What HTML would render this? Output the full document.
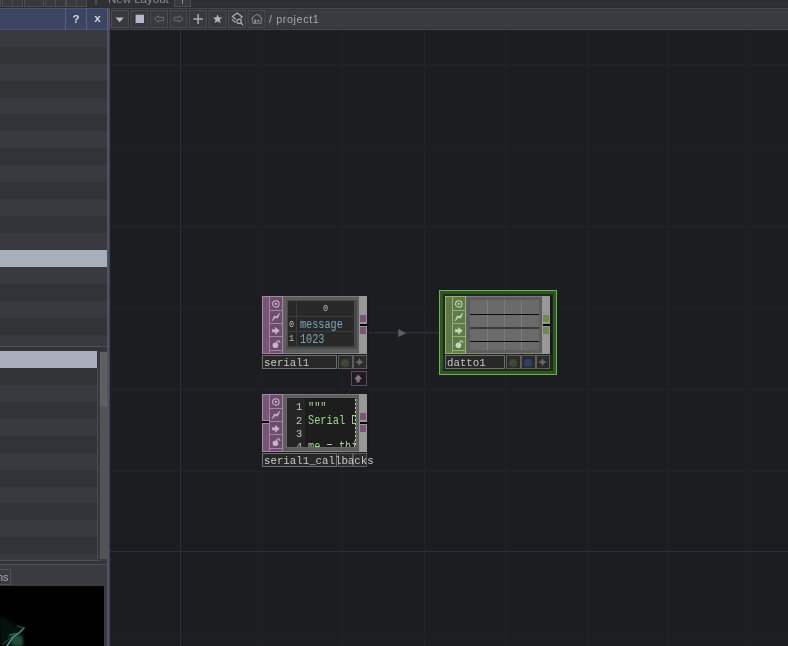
<!DOCTYPE html>
<html><head><meta charset="utf-8">
<style>
*{margin:0;padding:0;box-sizing:border-box}
html,body{width:788px;height:646px;overflow:hidden;background:#1c1d21;font-family:"Liberation Sans",sans-serif}
.a{position:absolute}
.m{font-family:"Liberation Mono",monospace;white-space:pre}
.t{will-change:transform}
svg{display:block}
</style></head><body>
<div class="a" style="left:0;top:0;width:788px;height:646px;overflow:hidden">

<div class="a" style="left:0px;top:0px;width:788px;height:8px;background:#2f3034"></div>
<div class="a" style="left:0px;top:7px;width:788px;height:1px;background:#2c2d31"></div>
<div class="a" style="left:-7px;top:-4px;width:8px;height:11px;border:1px solid #4c4d52;background:#38393e"></div>
<div class="a" style="left:2px;top:-4px;width:21px;height:11px;border:1px solid #4c4d52;background:#38393e"></div>
<div class="a" style="left:24px;top:-4px;width:20px;height:11px;border:1px solid #4c4d52;background:#38393e"></div>
<div class="a" style="left:45px;top:-4px;width:21px;height:11px;border:1px solid #4c4d52;background:#38393e"></div>
<div class="a" style="left:66px;top:-4px;width:21px;height:11px;border:1px solid #4c4d52;background:#38393e"></div>
<div class="a" style="left:12px;top:0px;width:1px;height:7px;background:#4c4d52"></div>
<div class="a" style="left:55px;top:0px;width:1px;height:7px;background:#4c4d52"></div>
<div class="a" style="left:76px;top:0px;width:1px;height:7px;background:#4c4d52"></div>
<div class="a" style="left:95px;top:0px;width:2px;height:5px;background:#4a4b50"></div>
<div class="a t" style="left:108px;top:-8.5px;font-size:11.5px;color:#8a8b90;white-space:nowrap;line-height:14px">New Layout</div>
<div class="a" style="left:174px;top:-4px;width:17px;height:11px;border:1px solid #4c4d52;background:#38393e"></div>
<div class="a" style="left:182px;top:0px;width:1px;height:4px;background:#8a8b90"></div>
<div class="a" style="left:0px;top:8px;width:108px;height:22px;background:#3b4562;border-top:1px solid #485371;border-bottom:1px solid #4a5573"></div>
<div class="a" style="left:65px;top:8px;width:1px;height:22px;background:#57628a"></div>
<div class="a" style="left:86px;top:8px;width:1px;height:22px;background:#57628a"></div>
<div class="a t" style="left:66px;top:7.8px;width:20px;height:22px;font-weight:bold;font-size:11.6px;color:#d3d6e0;text-align:center;line-height:22px">?</div>
<div class="a t" style="left:87px;top:7.6px;width:21px;height:22px;font-weight:bold;font-size:11.8px;color:#d3d6e0;text-align:center;line-height:21px">x</div>
<div class="a" style="left:0px;top:30px;width:107px;height:17px;background:#393a3f"></div>
<div class="a" style="left:0px;top:47px;width:107px;height:17px;background:#323337"></div>
<div class="a" style="left:0px;top:64px;width:107px;height:17px;background:#393a3f"></div>
<div class="a" style="left:0px;top:81px;width:107px;height:17px;background:#323337"></div>
<div class="a" style="left:0px;top:98px;width:107px;height:16px;background:#393a3f"></div>
<div class="a" style="left:0px;top:114px;width:107px;height:17px;background:#323337"></div>
<div class="a" style="left:0px;top:131px;width:107px;height:17px;background:#393a3f"></div>
<div class="a" style="left:0px;top:148px;width:107px;height:17px;background:#323337"></div>
<div class="a" style="left:0px;top:165px;width:107px;height:17px;background:#393a3f"></div>
<div class="a" style="left:0px;top:182px;width:107px;height:17px;background:#323337"></div>
<div class="a" style="left:0px;top:199px;width:107px;height:17px;background:#393a3f"></div>
<div class="a" style="left:0px;top:216px;width:107px;height:17px;background:#323337"></div>
<div class="a" style="left:0px;top:233px;width:107px;height:17px;background:#393a3f"></div>
<div class="a" style="left:0px;top:250px;width:107px;height:17px;background:#a9aebc"></div>
<div class="a" style="left:0px;top:267px;width:107px;height:17px;background:#393a3f"></div>
<div class="a" style="left:0px;top:284px;width:107px;height:17px;background:#323337"></div>
<div class="a" style="left:0px;top:301px;width:107px;height:17px;background:#393a3f"></div>
<div class="a" style="left:0px;top:318px;width:107px;height:17px;background:#323337"></div>
<div class="a" style="left:0px;top:335px;width:107px;height:11px;background:#393a3f"></div>
<div class="a" style="left:0px;top:346px;width:107px;height:1px;background:#4f5055"></div>
<div class="a" style="left:0px;top:347px;width:107px;height:4px;background:#333438"></div>
<div class="a" style="left:0px;top:351px;width:98px;height:17px;background:#a9aebc"></div>
<div class="a" style="left:0px;top:368px;width:97px;height:17px;background:#323337"></div>
<div class="a" style="left:0px;top:385px;width:97px;height:17px;background:#393a3f"></div>
<div class="a" style="left:0px;top:402px;width:97px;height:17px;background:#323337"></div>
<div class="a" style="left:0px;top:419px;width:97px;height:17px;background:#393a3f"></div>
<div class="a" style="left:0px;top:436px;width:97px;height:17px;background:#323337"></div>
<div class="a" style="left:0px;top:453px;width:97px;height:17px;background:#393a3f"></div>
<div class="a" style="left:0px;top:470px;width:97px;height:17px;background:#323337"></div>
<div class="a" style="left:0px;top:487px;width:97px;height:16px;background:#393a3f"></div>
<div class="a" style="left:0px;top:503px;width:97px;height:17px;background:#323337"></div>
<div class="a" style="left:0px;top:520px;width:97px;height:17px;background:#393a3f"></div>
<div class="a" style="left:0px;top:537px;width:97px;height:17px;background:#323337"></div>
<div class="a" style="left:0px;top:554px;width:97px;height:6px;background:#393a3f"></div>
<div class="a" style="left:97px;top:351px;width:10px;height:214px;background:#38393d"></div>
<div class="a" style="left:97px;top:368px;width:1px;height:192px;background:#4a4b4f"></div>
<div class="a" style="left:0px;top:560px;width:99px;height:1px;background:#505155"></div>
<div class="a" style="left:100px;top:352px;width:7px;height:207px;background:#535356"></div>
<div class="a" style="left:100px;top:352px;width:7px;height:54px;background:#5e5e60;border:1px solid #636365"></div>
<div class="a" style="left:0px;top:561px;width:107px;height:3px;background:#353639"></div>
<div class="a" style="left:0px;top:564px;width:107px;height:1px;background:#4f5055"></div>
<div class="a" style="left:0px;top:565px;width:107px;height:21px;background:#3a3b40"></div>
<div class="a" style="left:-20px;top:569px;width:31px;height:16px;border:1px solid #505156;background:#3a3b40"></div>
<div class="a t" style="left:-3.3px;top:569px;font-size:11px;color:#a9abb6;line-height:16px">ns</div>
<div class="a" style="left:0px;top:586px;width:104px;height:60px;background:#000"></div>
<div class="a" style="left:104px;top:586px;width:3px;height:60px;background:#3a3b40"></div>
<svg class="a" style="left:0;top:606px" width="40" height="40">
 <defs><filter id="bl" x="-50%" y="-50%" width="200%" height="200%"><feGaussianBlur stdDeviation="1.6"/></filter>
 <filter id="bl2" x="-50%" y="-50%" width="200%" height="200%"><feGaussianBlur stdDeviation="0.7"/></filter></defs>
 <path d="M0 10 Q10 14 16 20 Q22 21 24 24 L20 34 L22 40 L0 40 Z" fill="#0a261f" opacity="0.45" filter="url(#bl)"/>
 <path d="M10 30 Q18 27 23 31 L23 40 L12 40 Z" fill="#2c5c44" opacity="0.8" filter="url(#bl)"/>
 <g fill="none" stroke-linecap="round" filter="url(#bl2)">
  <path d="M24 22 L19 27 L13 31 L7 40" stroke="#4a9a8e" stroke-width="1.4"/>
  <path d="M9 29 L14 28 L19 27" stroke="#2f7568" stroke-width="1.1"/>
  <path d="M17 20 L24 22" stroke="#245a50" stroke-width="1"/>
  <path d="M3 38 L10 32" stroke="#235e52" stroke-width="1"/>
 </g>
</svg>
<div class="a" style="left:107px;top:30px;width:1px;height:616px;background:#50525a"></div>
<div class="a" style="left:108px;top:30px;width:1px;height:616px;background:#525068"></div>
<div class="a" style="left:109px;top:30px;width:1px;height:616px;background:#403e50"></div>
<div class="a" style="left:110px;top:30px;width:1px;height:616px;background:#222226"></div>
<div class="a" style="left:107px;top:9px;width:1px;height:20px;background:#56607f"></div>
<div class="a" style="left:108px;top:8px;width:1px;height:22px;background:#4d4b60"></div>
<div class="a" style="left:109px;top:8px;width:1px;height:22px;background:#5a5968"></div>
<div class="a" style="left:110px;top:8px;width:1px;height:22px;background:#2c2d31"></div>
<div class="a" style="left:111px;top:8px;width:677px;height:22px;background:#3a3b40"></div>
<div class="a" style="left:111px;top:8px;width:677px;height:1px;background:#47484d"></div>
<div class="a" style="left:111px;top:9px;width:677px;height:1px;background:#323338"></div>
<div class="a" style="left:111px;top:28px;width:677px;height:1px;background:#333438"></div>
<div class="a" style="left:111px;top:29px;width:677px;height:1px;background:#46474c"></div>
<svg class="a" style="left:110px;top:8px" width="160" height="22"><rect x="0.5" y="1.5" width="19" height="19" fill="none" stroke="#2e2f33"/><rect x="1.5" y="2.5" width="17" height="17" fill="#38393e" stroke="#4b4c51"/><rect x="20.0" y="1.5" width="19" height="19" fill="none" stroke="#2e2f33"/><rect x="21.0" y="2.5" width="17" height="17" fill="#38393e" stroke="#4b4c51"/><rect x="39.5" y="1.5" width="19" height="19" fill="none" stroke="#2e2f33"/><rect x="40.5" y="2.5" width="17" height="17" fill="#38393e" stroke="#4b4c51"/><rect x="59.0" y="1.5" width="19" height="19" fill="none" stroke="#2e2f33"/><rect x="60.0" y="2.5" width="17" height="17" fill="#38393e" stroke="#4b4c51"/><rect x="78.5" y="1.5" width="19" height="19" fill="none" stroke="#2e2f33"/><rect x="79.5" y="2.5" width="17" height="17" fill="#38393e" stroke="#4b4c51"/><rect x="98.0" y="1.5" width="19" height="19" fill="none" stroke="#2e2f33"/><rect x="99.0" y="2.5" width="17" height="17" fill="#38393e" stroke="#4b4c51"/><rect x="117.5" y="1.5" width="19" height="19" fill="none" stroke="#2e2f33"/><rect x="118.5" y="2.5" width="17" height="17" fill="#38393e" stroke="#4b4c51"/><rect x="137.0" y="1.5" width="19" height="19" fill="none" stroke="#2e2f33"/><rect x="138.0" y="2.5" width="17" height="17" fill="#38393e" stroke="#4b4c51"/></svg>
<svg class="a" style="left:110px;top:8px" width="160" height="22"><path d="M5.5 9.6 L13.8 9.6 L9.65 14.3 Z" fill="#b4b8c8"/><rect x="25.6" y="6.7" width="8.4" height="8.3" fill="#b4b8c8"/><path d="M44.5 11 L48.5 7.5 L48.5 9.3 L53.5 9.3 L53.5 12.7 L48.5 12.7 L48.5 14.5 Z" fill="none" stroke="#6c6d74" stroke-width="1"/><path d="M73 11 L69 7.5 L69 9.3 L64 9.3 L64 12.7 L69 12.7 L69 14.5 Z" fill="none" stroke="#6c6d74" stroke-width="1"/><path d="M83.4 11 H92.9 M88.15 6 V16" stroke="#a9acba" stroke-width="1.5"/><path d="M107.6 6.2 L108.9 9.5 L112.4 9.6 L109.7 11.8 L110.6 15.2 L107.6 13.3 L104.6 15.2 L105.5 11.8 L102.8 9.6 L106.3 9.5 Z" fill="#b0b4c4"/><g fill="none" stroke="#acaeb8" stroke-width="1.2" stroke-linecap="round"><path d="M122.4 8.6 L127.2 4.9 L132.2 8.7 L130.9 9.8"/><path d="M122.4 8.6 L125.6 11"/><path d="M122.4 11.6 L125.2 14.4"/><circle cx="129.1" cy="13.3" r="2.2"/><path d="M130.7 14.9 L132.7 16.7"/></g><g fill="none" stroke="#84868e" stroke-width="1"><path d="M141.2 10.6 L146.9 6.2 L152.2 10.6"/><path d="M142.6 9.8 V15.2 H151.2 V9.8"/><path d="M149.9 6.6 V8.6"/></g><rect x="144.3" y="11.4" width="1.8" height="4" fill="#8a8c94"/><rect x="147.2" y="11.8" width="2.1" height="2" fill="#8a8c94"/></svg>
<div class="a t" style="left:269px;top:11px;font-size:10.8px;letter-spacing:0.6px;color:#a4a6b2;line-height:16px;white-space:nowrap">/ project1</div>
<svg class="a" style="left:110px;top:30px" width="678" height="616"><g stroke="#212226" stroke-width="1"><path d="M151.5 0V616"/><path d="M232.5 0V616"/><path d="M314.5 0V616"/><path d="M395.5 0V616"/><path d="M477.5 0V616"/><path d="M558.5 0V616"/><path d="M639.5 0V616"/><path d="M0 34.5H678"/><path d="M0 115.5H678"/><path d="M0 196.5H678"/><path d="M0 278.5H678"/><path d="M0 359.5H678"/><path d="M0 441.5H678"/><path d="M0 603.5H678"/></g><g stroke="#2d2c40" stroke-width="1"><path d="M70.5 0V616"/><path d="M0 521.5H678"/></g></svg>
<svg class="a" style="left:367px;top:326px" width="73" height="14"><path d="M0 6.7 H73" stroke="#2d2f34" stroke-width="1.4"/><path d="M31.3 3 L39.3 7.2 L31.3 11 Z" fill="#59606b"/></svg>
<div class="a" style="left:262px;top:296px;width:21px;height:58px;background:#a882a8"></div>
<div class="a" style="left:263px;top:297px;width:6px;height:56px;background:#755773"></div>
<div class="a" style="left:270px;top:297px;width:12px;height:13px;background:#6c4e6b"></div>
<div class="a" style="left:270px;top:311px;width:12px;height:12px;background:#6c4e6b"></div>
<div class="a" style="left:270px;top:324px;width:12px;height:12px;background:#6c4e6b"></div>
<div class="a" style="left:270px;top:337px;width:12px;height:13px;background:#6c4e6b"></div>
<div class="a" style="left:270px;top:351px;width:12px;height:2px;background:#6c4e6b"></div>
<svg class="a" style="left:270px;top:296px" width="12" height="54"><circle cx="5.8" cy="7.9" r="3.2" fill="none" stroke="#cdb1cc" stroke-width="1.1"/><circle cx="5.8" cy="7.9" r="1.1" fill="#cdb1cc"/><path d="M2 25 L4.4 19.8 L6.3 20.6 L9.9 17 L7.6 22.3 L5.6 21.5 Z" fill="#cdb1cc" stroke="#cdb1cc" stroke-width="0.5" stroke-linejoin="round"/><path d="M2.2 33.6 H5.4 V31.4 L9.4 34.8 L5.4 38.2 V36 H2.2 Z" fill="#cdb1cc" stroke="#cdb1cc" stroke-width="0.5" stroke-linejoin="round"/><circle cx="5.4" cy="49.3" r="2.8" fill="#cdb1cc"/><path d="M6.9 47.2 V46.2 A1.45 1.45 0 0 1 9.8 46.2 V47" fill="none" stroke="#cdb1cc" stroke-width="1.1"/></svg>
<div class="a" style="left:283px;top:296px;width:84px;height:58px;background:#666666"></div>
<div class="a" style="left:283px;top:296px;width:84px;height:1px;background:#7a7a7a"></div>
<div class="a" style="left:283px;top:353px;width:84px;height:1px;background:#858585"></div>
<div class="a" style="left:367px;top:296px;width:2px;height:58px;background:#18191c"></div>
<div class="a" style="left:284px;top:297px;width:75px;height:56px;background:#5c5c5c"></div>
<div class="a" style="left:359px;top:296px;width:8px;height:58px;background:#989898"></div>
<div class="a" style="left:360px;top:315px;width:6px;height:7px;background:#7a5577"></div>
<div class="a" style="left:360px;top:324px;width:8px;height:2px;background:#000"></div>
<div class="a" style="left:360px;top:327px;width:6px;height:7px;background:#7a5577"></div>
<div class="a" style="left:287px;top:300px;width:70px;height:49px;background:#4a4a4a"></div>
<div class="a" style="left:288px;top:301px;width:66px;height:46px;background:#303030"></div>
<div class="a" style="left:288px;top:301px;width:65px;height:45px;background:#282828"></div>
<div class="a" style="left:296px;top:301px;width:1px;height:46px;background:#3c3c3c"></div>
<div class="a" style="left:288px;top:316px;width:66px;height:1px;background:#3c3c3c"></div>
<div class="a" style="left:288px;top:331px;width:66px;height:1px;background:#3c3c3c"></div>
<div class="a" style="left:288px;top:346px;width:66px;height:1px;background:#3c3c3c"></div>
<div class="a m t" style="left:322.5px;top:303px;font-size:8.6px;line-height:12px;color:#bcbcbc;transform:scaleY(1.15)">0</div>
<div class="a m t" style="left:289px;top:318.5px;font-size:8.6px;line-height:12px;color:#bcbcbc;transform:scaleY(1.15)">0</div>
<div class="a m t" style="left:289px;top:333px;font-size:8.6px;line-height:12px;color:#bcbcbc;transform:scaleY(1.15)">1</div>
<div class="a m t" style="left:299.5px;top:319px;font-size:10.2px;line-height:14px;color:#80a6ba;transform:scaleY(1.18)">message</div>
<div class="a m t" style="left:299.5px;top:333.5px;font-size:10.2px;line-height:14px;color:#80a6ba;transform:scaleY(1.18)">1023</div>
<div class="a" style="left:262px;top:355px;width:75px;height:14px;border:1px solid #6e6e6e;background:#282828"></div>
<div class="a" style="left:338px;top:355px;width:15px;height:14px;border:1px solid #5e5e5e;background:#2b2b2b"></div>
<div class="a" style="left:341px;top:359px;width:7.5px;height:7.5px;border-radius:50%;background:#3d4937"></div>
<div class="a" style="left:353px;top:355px;width:14px;height:14px;border:1px solid #5e5e5e;background:#2b2b2b"></div>
<svg class="a" style="left:353px;top:355px" width="14" height="14"><path d="M6.5 2.5 Q7 6 10.8 7 Q7 8 6.5 11.6 Q6 8 2.2 7 Q6 6 6.5 2.5 Z" fill="#666"/></svg>
<div class="a m t" style="left:263.8px;top:356.3px;font-size:10.75px;line-height:14px;color:#c6c6c6;transform:scaleY(1.07);transform-origin:0 50%">serial1</div>
<div class="a" style="left:262px;top:394px;width:21px;height:58px;background:#a882a8"></div>
<div class="a" style="left:263px;top:395px;width:6px;height:24px;background:#755773"></div>
<div class="a" style="left:263px;top:395px;width:6px;height:25px;background:#755773"></div>
<div class="a" style="left:262px;top:421px;width:7px;height:2px;background:#000"></div>
<div class="a" style="left:263px;top:424px;width:6px;height:27px;background:#755773"></div>
<div class="a" style="left:262px;top:420px;width:8px;height:1px;background:#a882a8"></div>
<div class="a" style="left:262px;top:423px;width:8px;height:1px;background:#a882a8"></div>
<div class="a" style="left:270px;top:395px;width:12px;height:13px;background:#6c4e6b"></div>
<div class="a" style="left:270px;top:409px;width:12px;height:12px;background:#6c4e6b"></div>
<div class="a" style="left:270px;top:422px;width:12px;height:12px;background:#6c4e6b"></div>
<div class="a" style="left:270px;top:435px;width:12px;height:13px;background:#6c4e6b"></div>
<div class="a" style="left:270px;top:449px;width:12px;height:2px;background:#6c4e6b"></div>
<svg class="a" style="left:270px;top:394px" width="12" height="54"><circle cx="5.8" cy="7.9" r="3.2" fill="none" stroke="#cdb1cc" stroke-width="1.1"/><circle cx="5.8" cy="7.9" r="1.1" fill="#cdb1cc"/><path d="M2 25 L4.4 19.8 L6.3 20.6 L9.9 17 L7.6 22.3 L5.6 21.5 Z" fill="#cdb1cc" stroke="#cdb1cc" stroke-width="0.5" stroke-linejoin="round"/><path d="M2.2 33.6 H5.4 V31.4 L9.4 34.8 L5.4 38.2 V36 H2.2 Z" fill="#cdb1cc" stroke="#cdb1cc" stroke-width="0.5" stroke-linejoin="round"/><circle cx="5.4" cy="49.3" r="2.8" fill="#cdb1cc"/><path d="M6.9 47.2 V46.2 A1.45 1.45 0 0 1 9.8 46.2 V47" fill="none" stroke="#cdb1cc" stroke-width="1.1"/></svg>
<div class="a" style="left:283px;top:394px;width:84px;height:58px;background:#666666"></div>
<div class="a" style="left:283px;top:394px;width:84px;height:1px;background:#7a7a7a"></div>
<div class="a" style="left:283px;top:451px;width:84px;height:1px;background:#858585"></div>
<div class="a" style="left:367px;top:394px;width:2px;height:58px;background:#18191c"></div>
<div class="a" style="left:284px;top:395px;width:75px;height:56px;background:#5c5c5c"></div>
<div class="a" style="left:359px;top:394px;width:8px;height:58px;background:#989898"></div>
<div class="a" style="left:360px;top:413px;width:6px;height:7px;background:#7a5577"></div>
<div class="a" style="left:360px;top:422px;width:8px;height:2px;background:#000"></div>
<div class="a" style="left:360px;top:425px;width:6px;height:7px;background:#7a5577"></div>
<div class="a" style="left:286px;top:397px;width:71px;height:51px;background:#666"></div>
<div class="a" style="left:287px;top:398px;width:69px;height:49px;background:#1d1d1d"></div>
<div class="a" style="left:287px;top:398px;width:18px;height:49px;background:#252525"></div>
<div class="a" style="left:287px;top:398px;width:69px;height:49px;overflow:hidden"><div class="a m t" style="left:8.5px;top:3.3px;font-size:10.4px;line-height:13px;color:#c2c2c2;transform:scaleY(1.12)">1</div><div class="a m t" style="left:8.5px;top:16.65px;font-size:10.4px;line-height:13px;color:#c2c2c2;transform:scaleY(1.12)">2</div><div class="a m t" style="left:8.5px;top:30.0px;font-size:10.4px;line-height:13px;color:#c2c2c2;transform:scaleY(1.12)">3</div><div class="a m t" style="left:8.5px;top:43.349999999999994px;font-size:10.4px;line-height:13px;color:#c2c2c2;transform:scaleY(1.12)">4</div><div class="a m t" style="left:20.8px;top:2.6px;font-size:10.3px;line-height:11.13px;color:#9fd88f;transform:scaleY(1.2);transform-origin:0 0">&quot;&quot;&quot;
Serial DAT

me = this</div></div>
<div class="a" style="left:355px;top:399px;width:1px;height:48px;background:repeating-linear-gradient(#c8c8c8 0 2px,#444 2px 4px)"></div>
<div class="a" style="left:262px;top:453px;width:75px;height:14px;border:1px solid #6e6e6e;background:#282828"></div>
<div class="a" style="left:338px;top:453px;width:15px;height:14px;border:1px solid #5e5e5e;background:#2b2b2b"></div>
<div class="a" style="left:353px;top:453px;width:14px;height:14px;border:1px solid #5e5e5e;background:#2b2b2b"></div>
<div class="a m t" style="left:263.8px;top:454.3px;font-size:10.75px;line-height:14px;color:#c6c6c6;transform:scaleY(1.07);transform-origin:0 50%">serial1_callbacks</div>
<div class="a" style="left:351px;top:371px;width:16px;height:15px;border:1px solid #614962"></div>
<svg class="a" style="left:340px;top:371px" width="27" height="24"><path d="M19 10 L6 23.5" stroke="#2e2f35" stroke-width="1"/><path d="M18.2 3.6 L21.6 7.6 Q22 8.4 21 8.4 L19.6 8.4 L19.6 11.2 L16.6 11.2 L16.6 8.4 L15.2 8.4 Q14.4 8.4 14.8 7.6 Z" fill="#936c91"/></svg>
<div class="a" style="left:439px;top:290px;width:118px;height:85px;border:1px solid #6eb352;background:#2f5523"></div>
<div class="a" style="left:443px;top:294px;width:110px;height:77px;background:#1d2a1a"></div>
<div class="a" style="left:445px;top:296px;width:21px;height:58px;background:#92b274"></div>
<div class="a" style="left:446px;top:297px;width:6px;height:56px;background:#627649"></div>
<div class="a" style="left:453px;top:297px;width:12px;height:13px;background:#617a4c"></div>
<div class="a" style="left:453px;top:311px;width:12px;height:12px;background:#617a4c"></div>
<div class="a" style="left:453px;top:324px;width:12px;height:12px;background:#617a4c"></div>
<div class="a" style="left:453px;top:337px;width:12px;height:13px;background:#617a4c"></div>
<div class="a" style="left:453px;top:351px;width:12px;height:2px;background:#617a4c"></div>
<svg class="a" style="left:453px;top:296px" width="12" height="54"><circle cx="5.8" cy="7.9" r="3.2" fill="none" stroke="#c4d9b6" stroke-width="1.1"/><circle cx="5.8" cy="7.9" r="1.1" fill="#c4d9b6"/><path d="M2 25 L4.4 19.8 L6.3 20.6 L9.9 17 L7.6 22.3 L5.6 21.5 Z" fill="#c4d9b6" stroke="#c4d9b6" stroke-width="0.5" stroke-linejoin="round"/><path d="M2.2 33.6 H5.4 V31.4 L9.4 34.8 L5.4 38.2 V36 H2.2 Z" fill="#c4d9b6" stroke="#c4d9b6" stroke-width="0.5" stroke-linejoin="round"/><circle cx="5.4" cy="49.3" r="2.8" fill="#c4d9b6"/><path d="M6.9 47.2 V46.2 A1.45 1.45 0 0 1 9.8 46.2 V47" fill="none" stroke="#c4d9b6" stroke-width="1.1"/></svg>
<div class="a" style="left:466px;top:296px;width:84px;height:58px;background:#666666"></div>
<div class="a" style="left:466px;top:296px;width:84px;height:1px;background:#7a7a7a"></div>
<div class="a" style="left:466px;top:353px;width:84px;height:1px;background:#858585"></div>
<div class="a" style="left:550px;top:296px;width:2px;height:58px;background:#18191c"></div>
<div class="a" style="left:467px;top:297px;width:75px;height:56px;background:#5c5c5c"></div>
<div class="a" style="left:542px;top:296px;width:8px;height:58px;background:#989898"></div>
<div class="a" style="left:543px;top:315px;width:6px;height:7px;background:#6a8a56"></div>
<div class="a" style="left:543px;top:324px;width:8px;height:2px;background:#000"></div>
<div class="a" style="left:543px;top:327px;width:6px;height:7px;background:#6a8a56"></div>
<div class="a" style="left:467px;top:297px;width:75px;height:56px;background:#5d5d5d"></div>
<div class="a" style="left:470px;top:300px;width:69px;height:50px;background:#6a6a6a"></div>
<div class="a" style="left:487px;top:300px;width:1px;height:50px;background:#7e7e7e"></div>
<div class="a" style="left:521px;top:300px;width:1px;height:50px;background:#7e7e7e"></div>
<div class="a" style="left:504px;top:300px;width:1px;height:50px;background:repeating-linear-gradient(#808080 0 2px,transparent 2px 3px)"></div>
<div class="a" style="left:470px;top:314px;width:69px;height:1.2px;background:#0a0a0a"></div>
<div class="a" style="left:470px;top:327px;width:69px;height:1.5px;background:#3c3c3c"></div>
<div class="a" style="left:470px;top:341px;width:69px;height:1.2px;background:#0a0a0a"></div>
<div class="a" style="left:445px;top:355px;width:60px;height:14px;border:1px solid #6e6e6e;background:#282828"></div>
<div class="a" style="left:506px;top:355px;width:15px;height:14px;border:1px solid #5e5e5e;background:#2b2b2b"></div>
<div class="a" style="left:509px;top:359px;width:7.5px;height:7.5px;border-radius:50%;background:#3d4937"></div>
<div class="a" style="left:521px;top:355px;width:15px;height:14px;border:1px solid #5e5e5e;background:#2b2b2b"></div>
<div class="a" style="left:524px;top:359px;width:7.5px;height:7.5px;border-radius:50%;background:#2e3e64"></div>
<div class="a" style="left:536px;top:355px;width:14px;height:14px;border:1px solid #5e5e5e;background:#2b2b2b"></div>
<svg class="a" style="left:536px;top:355px" width="14" height="14"><path d="M6.5 2.5 Q7 6 10.8 7 Q7 8 6.5 11.6 Q6 8 2.2 7 Q6 6 6.5 2.5 Z" fill="#666"/></svg>
<div class="a m t" style="left:446.8px;top:356.3px;font-size:10.75px;line-height:14px;color:#c6c6c6;transform:scaleY(1.07);transform-origin:0 50%">datto1</div>
</div></body></html>
